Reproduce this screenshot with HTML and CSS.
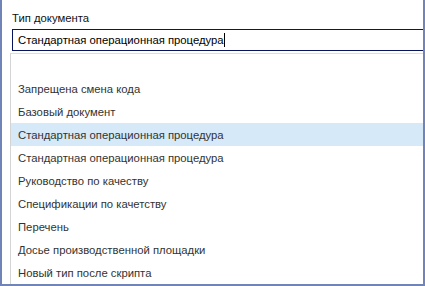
FILE: index.html
```html
<!DOCTYPE html>
<html>
<head>
  <meta charset="utf-8">
  <meta name="viewport" content="width=device-width, initial-scale=1">
  <title>Тип документа</title>
  <link rel="stylesheet" href="styles.css">
</head>
<body>
  <div class="window">
    <div class="field">
      <label class="field-label">Тип документа</label>
      <div class="combo-input">Стандартная операционная процедура<span class="caret"></span></div>
    </div>
    <ul class="dropdown">
      <li class="option empty">&nbsp;</li>
      <li class="option">Запрещена смена кода</li>
      <li class="option">Базовый документ</li>
      <li class="option selected">Стандартная операционная процедура</li>
      <li class="option">Стандартная операционная процедура</li>
      <li class="option">Руководство по качеству</li>
      <li class="option">Спецификации по качетству</li>
      <li class="option">Перечень</li>
      <li class="option">Досье производственной площадки</li>
      <li class="option">Новый тип после скрипта</li>
    </ul>
  </div>
</body>
</html>
```

FILE: styles.css
```css
html, body {
  margin: 0;
  padding: 0;
  background-color: white;
}
body {
  font-family: "Liberation Sans", Arial, sans-serif;
  font-size: 11.3px;
  color: #222;
}
.window {
  box-sizing: border-box;
  height: 286px;
  border-left: 2px solid #7084b8;
  border-right: 2px solid #7084b8;
  border-bottom: 2px solid #7084b8;
  overflow: hidden;
}
.field {
  padding: 10px 0 0 10px;
}
.field-label {
  display: block;
  line-height: 16px;
  margin-bottom: 3px;
  color: #111;
}
.combo-input {
  box-sizing: border-box;
  height: 22px;
  line-height: 20px;
  padding-left: 5px;
  border: 1px solid #0a1560;
  border-right: none;
  color: #000;
}
.caret {
  display: inline-block;
  width: 1px;
  height: 14px;
  background-color: #000;
  vertical-align: -3px;
}
.dropdown {
  list-style: none;
  margin: 2px 0 0 8px;
  padding: 0;
  border-left: 1px solid #d4d4d4;
  border-top: 1px solid #dedede;
  border-bottom: 1px solid #c8c8c8;
  position: relative;
}
.dropdown::after {
  content: "";
  position: absolute;
  left: 0;
  bottom: -2px;
  width: 1px;
  height: 1px;
  background-color: #e02020;
}
.option {
  height: 23px;
  line-height: 24px;
  padding-left: 7px;
  color: #333;
  white-space: nowrap;
}
.option.selected {
  background-color: #d6e9f8;
}
```
